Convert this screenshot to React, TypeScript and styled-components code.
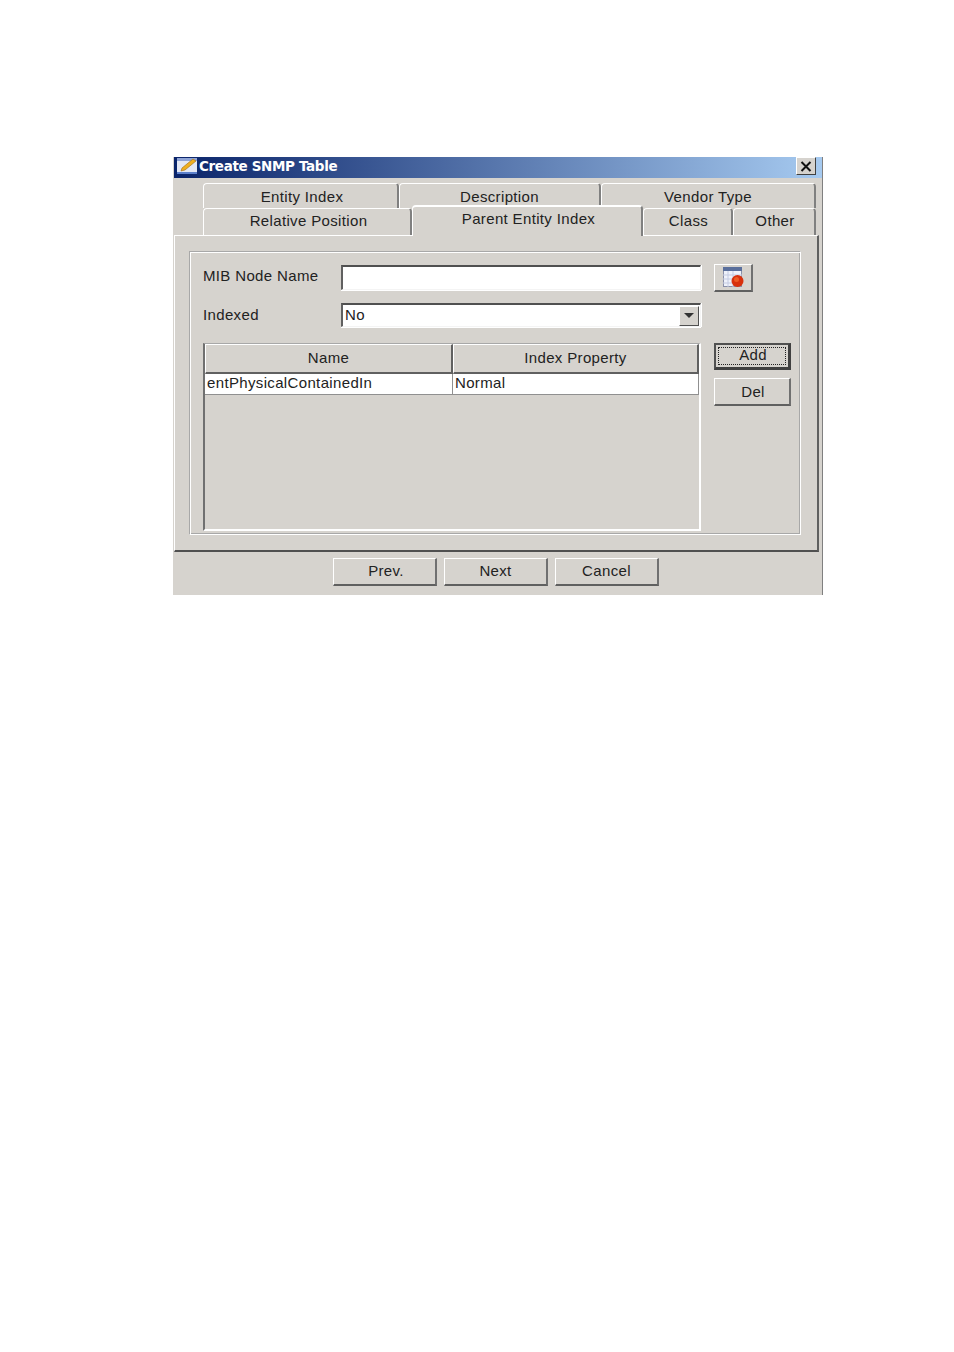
import React from 'react';
import styled, { createGlobalStyle } from 'styled-components';

const Global = createGlobalStyle`
  html, body { margin: 0; padding: 0; background: #ffffff; }
  * { box-sizing: border-box; }
`;

const Page = styled.div`
  width: 954px;
  height: 1352px;
  padding: 157px 0 0 173px;
  font-family: "Liberation Sans", Arial, sans-serif;
  font-size: 15px;
  letter-spacing: 0.35px;
  color: #222222;
`;

const Win = styled.div`
  width: 650px;
  height: 438px;
  background: #d6d3ce;
  border-right: 1px solid #808080;
  display: flex;
  flex-direction: column;
`;

const TitleBar = styled.div`
  height: 21px;
  margin-left: 1px;
  padding: 0 6px 3px 2px;
  display: flex;
  align-items: center;
  background: linear-gradient(to right, #0a246a, #a6caf0);
`;

const TitleText = styled.span`
  margin-left: 1px;
  flex: 1;
  font-family: "DejaVu Sans", sans-serif;
  font-weight: bold;
  font-size: 13.5px;
  letter-spacing: -0.35px;
  color: #ffffff;
`;

const CloseBtn = styled.div`
  width: 20px;
  height: 18px;
  background: #d6d3ce;
  border: 1px solid;
  border-color: #ffffff #404040 #404040 #ffffff;
  display: flex;
  align-items: center;
  justify-content: center;
`;

const TabArea = styled.div`
  margin-top: 5px;
  padding-left: 30px;
  display: flex;
  flex-direction: column;
`;

const TabRow = styled.div<{ $h: number }>`
  display: flex;
  height: ${p => p.$h}px;
  align-items: flex-end;
`;

const Tab = styled.div<{ $w: number; $active?: boolean }>`
  width: ${p => p.$w}px;
  height: ${p => (p.$active ? '31px' : '100%')};
  flex: none;
  display: flex;
  align-items: center;
  justify-content: center;
  background: #d6d3ce;
  border-top: ${p => (p.$active ? 2 : 1)}px solid #ffffff;
  border-left: 1px solid #ffffff;
  border-right: 2px solid #808080;
  border-radius: 4px 4px 0 0;
  position: relative;
  z-index: ${p => (p.$active ? 2 : 1)};
  padding-bottom: ${p => (p.$active ? 7 : 0)}px;
  padding-left: ${p => (p.$active ? 3 : 0)}px;
  ${p => (p.$active ? 'margin-bottom: -1px;' : '')}
  &:first-child {
    padding-left: 3px;
  }
`;

const LowTab = styled(Tab)`
  padding-bottom: 3px;
  padding-left: 2px;
`;

const Panel = styled.div`
  width: 645px;
  height: 317px;
  margin-left: 1px;
  padding: 15px 16px 16px 14px;
  border-style: solid;
  border-width: 1px 2px 2px 1px;
  border-color: #ffffff #606060 #505050 #ffffff;
`;

const Group = styled.div`
  height: 284px;
  padding: 12px 8px 2px 13px;
  border: 1px solid;
  border-color: #a8a8a8 #ffffff #ffffff #a8a8a8;
  box-shadow: inset 1px 1px 0 #ffffff, inset -1px -1px 0 #a8a8a8;
  display: grid;
  grid-template-columns: 125px 360px 77px;
  grid-template-rows: 39px 40px 188px;
  column-gap: 13px;
  align-items: start;
`;

const Label = styled.label`
  height: 26px;
  padding-bottom: 3px;
  display: flex;
  align-items: center;
`;

const Sunken = styled.div`
  height: 25px;
  margin-top: 1px;
  background: #ffffff;
  border-style: solid;
  border-width: 2px 1px 1px 2px;
  border-color: #505050 #f4f4f4 #f4f4f4 #606060;
  box-shadow: 0 1px 0 #ffffff, 1px 0 0 #ffffff;
  display: flex;
  align-items: center;
  padding-left: 2px;
`;

const Combo = styled(Sunken)`
  height: 24px;
  margin-top: 0;
  justify-content: space-between;
  padding-right: 1px;
`;

const ComboText = styled.span`
  padding-bottom: 2px;
`;

const ComboArrow = styled.div`
  width: 20px;
  height: 20px;
  background: #d6d3ce;
  border: 1px solid;
  border-color: #ffffff #505050 #505050 #ffffff;
  display: flex;
  align-items: center;
  justify-content: center;
`;

const Arrow = styled.div`
  width: 0;
  height: 0;
  border-left: 5px solid transparent;
  border-right: 5px solid transparent;
  border-top: 5px solid #333333;
`;

const Btn = styled.div<{ $w?: number; $h?: number }>`
  width: ${p => (p.$w ? `${p.$w}px` : '100%')};
  height: ${p => p.$h ?? 27}px;
  flex: none;
  background: #d6d3ce;
  border-style: solid;
  border-width: 1px 2px 2px 1px;
  border-color: #ffffff #707070 #606060 #ffffff;
  display: flex;
  align-items: center;
  justify-content: center;
`;

const SideBtn = styled(Btn)`
  padding-left: 2px;
`;

const DefaultBtn = styled(Btn)`
  border-width: 2px 3px 3px 2px;
  border-color: #505050 #404040 #404040 #505050;
  padding: 2px;
`;

const FocusBox = styled.div`
  width: 100%;
  height: 100%;
  padding: 0 0 3px 2px;
  border: 1px dotted #222222;
  display: flex;
  align-items: center;
  justify-content: center;
  line-height: 1;
`;

const Table = styled.div`
  grid-column: 1 / 3;
  height: 188px;
  border-style: solid;
  border-width: 1px 2px 2px 2px;
  border-color: #a8a8a8 #ffffff #ffffff #707070;
  display: flex;
  flex-direction: column;
`;

const TRow = styled.div`
  display: grid;
  grid-template-columns: 248px 246px;
`;

const Th = styled.div`
  height: 30px;
  padding-bottom: 2px;
  background: #d6d3ce;
  border-style: solid;
  border-width: 1px 2px 2px 1px;
  border-color: #ffffff #606060 #606060 #ffffff;
  display: flex;
  align-items: center;
  justify-content: center;
`;

const Td = styled.div`
  height: 21px;
  background: #ffffff;
  border-right: 1px solid #909090;
  border-bottom: 1px solid #909090;
  padding: 0 0 3px 2px;
  display: flex;
  align-items: center;
  white-space: nowrap;
`;

const SideButtons = styled.div`
  display: flex;
  flex-direction: column;
  gap: 8px;
`;

const Footer = styled.div`
  flex: 1;
  padding: 6px 0 0 160px;
  display: flex;
  gap: 7px;
  align-items: flex-start;
`;

const FooterBtn = styled(Btn)`
  padding-bottom: 2px;
  &:first-child {
    padding-left: 3px;
  }
`;

const TableIcon = () => (
  <svg width="23" height="21" viewBox="0 0 23 21">
    <rect x="1.5" y="0.5" width="18" height="19" fill="#eef1fa" stroke="#8a90a8" />
    <rect x="1" y="0" width="19" height="4" fill="#5a6f9c" />
    <path d="M1 8h19M1 12h19M1 16h19M6 4v16M11 4v16" stroke="#c4cbe2" fill="none" />
    <circle cx="15.5" cy="14" r="6" fill="#d8300c" />
    <circle cx="14.5" cy="12.5" r="2.5" fill="#ee5a24" />
  </svg>
);

const AppIcon = () => (
  <svg width="22" height="18" viewBox="0 0 22 18">
    <rect x="1" y="1" width="20" height="16" fill="#e4e8f4" />
    <rect x="1" y="1" width="20" height="3" fill="#8fa4d6" />
    <rect x="1" y="15" width="20" height="2" fill="#5c80cc" />
    <path d="M6 11 L17 2 L20 4 L9 13 L5 14 Z" fill="#f0b020" stroke="#a06a10" strokeWidth="0.6" />
  </svg>
);

const App = () => {
  return (
    <>
      <Global />
      <Page>
        <Win>
          <TitleBar>
            <AppIcon />
            <TitleText>Create SNMP Table</TitleText>
            <CloseBtn>
              <svg width="12" height="11" viewBox="0 0 12 11">
                <path d="M1.5 1 L10.5 10 M10.5 1 L1.5 10" stroke="#111111" strokeWidth="2" />
              </svg>
            </CloseBtn>
          </TitleBar>
          <TabArea>
            <TabRow $h={25}>
              <Tab $w={196}>Entity Index</Tab>
              <Tab $w={202}>Description</Tab>
              <Tab $w={215}>Vendor Type</Tab>
            </TabRow>
            <TabRow $h={27}>
              <LowTab $w={209}>Relative Position</LowTab>
              <Tab $w={231} $active>Parent Entity Index</Tab>
              <LowTab $w={90}>Class</LowTab>
              <LowTab $w={83}>Other</LowTab>
            </TabRow>
          </TabArea>
          <Panel>
            <Group>
              <Label>MIB Node Name</Label>
              <Sunken />
              <Btn $w={39} $h={28}><TableIcon /></Btn>
              <Label>Indexed</Label>
              <Combo>
                <ComboText>No</ComboText>
                <ComboArrow><Arrow /></ComboArrow>
              </Combo>
              <span />
              <Table>
                <TRow>
                  <Th>Name</Th>
                  <Th>Index Property</Th>
                </TRow>
                <TRow>
                  <Td>entPhysicalContainedIn</Td>
                  <Td>Normal</Td>
                </TRow>
              </Table>
              <SideButtons>
                <DefaultBtn $h={27}><FocusBox>Add</FocusBox></DefaultBtn>
                <SideBtn $h={28}>Del</SideBtn>
              </SideButtons>
            </Group>
          </Panel>
          <Footer>
            <FooterBtn $w={104} $h={28}>Prev.</FooterBtn>
            <FooterBtn $w={104} $h={28}>Next</FooterBtn>
            <FooterBtn $w={104} $h={28}>Cancel</FooterBtn>
          </Footer>
        </Win>
      </Page>
    </>
  );
};

export default App;
